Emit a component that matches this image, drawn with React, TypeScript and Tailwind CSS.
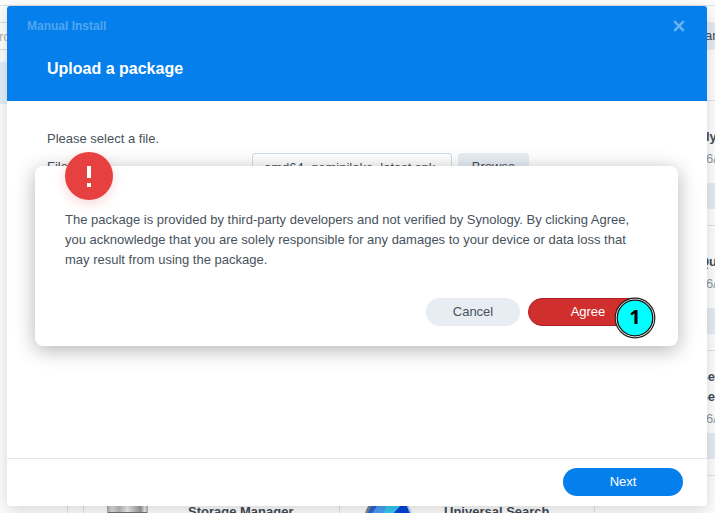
import type { ReactNode } from "react";

function PackageRow({ title, className, button, titleClass }: { title: ReactNode; className: string; button: string; titleClass: string }) {
  return (
    <div className={`flex shrink-0 flex-col border-b border-[#dfe2e6] ${className}`}>
      <div className={`font-bold leading-5 text-[#414b55] ${titleClass}`}>{title}</div>
      <div className="mt-0.5 pl-[6px] text-[13px] leading-5 text-[#8b96a3]">6/</div>
      <div className={`ml-1 bg-[#e5ebf2] ${button}`} />
    </div>
  );
}

function PackageCenter() {
  return (
    <div className="flex h-[513px] w-[715px] overflow-hidden bg-[#fdfdfd]">
      <div className="flex w-[67px] shrink-0 flex-col">
        <div className="h-[6px] border-b border-[#dbdfe3]" />
        <div className="mt-4 flex h-7 items-center border-y border-[#d5dde5] bg-white text-[13px] text-[#b9b1ad]">
          <span className="-ml-px mt-px">rch</span>
        </div>
        <div className="mt-3 h-[42px] bg-[#e3f0fc]" />
      </div>
      <div className="flex w-[633px] shrink-0 flex-col">
        <div className="h-[6px] border-b border-[#dbdfe3]" />
        <div className="mt-[494px] flex h-[13px]">
          <div className="w-[17px] shrink-0 border-x border-[#dfe2e6]" />
          <div className="flex h-10 w-64 shrink-0 border-r border-[#dfe2e6] pl-[23px]">
            <svg width="41" height="20" viewBox="0 0 41 20">
              <defs>
                <linearGradient id="metal">
                  <stop stopColor="#aaa" />
                  <stop offset=".12" stopColor="#ddd" />
                  <stop offset=".3" stopColor="#bbb" />
                  <stop offset=".5" stopColor="#eee" />
                  <stop offset=".82" stopColor="#999" />
                  <stop offset=".92" stopColor="#eee" />
                  <stop offset="1" stopColor="#aaa" />
                </linearGradient>
              </defs>
              <rect width="41" height="20" rx="2" fill="url(#metal)" />
              <path d="M1 12.5h39" stroke="#707474" strokeWidth="1" />
            </svg>
            <span className="ml-10 mt-0.5 text-[13px] font-bold leading-5 text-[#414b55]">Storage Manager</span>
          </div>
          <div className="flex h-10 w-[255px] shrink-0 border-r border-[#dfe2e6] pl-[23px]">
            <svg width="50" height="40" viewBox="0 0 50 40">
              <ellipse cx="26" cy="21" rx="24" ry="26" fill="#b9d6ef" />
              <ellipse cx="24" cy="21" rx="23" ry="26" fill="#718492" />
              <ellipse cx="25" cy="21" rx="21" ry="24" fill="#2b62cf" />
              <path d="M6 18L14 6L31 4L20 20Z" fill="#4c9ef5" />
              <path d="M19 17L24 4H40L27 20Z" fill="#35c9ee" />
              <path d="M28 16L39 4H43L48 16L38 24Z" fill="#0642d9" />
            </svg>
            <span className="ml-[31px] mt-0.5 text-[13px] font-bold leading-5 text-[#414b55]">Universal Search</span>
          </div>
        </div>
      </div>
      <div className="flex w-[15px] shrink-0 flex-col overflow-hidden text-[13px]">
        <div className="h-[6px] shrink-0 border-b border-[#dbdfe3]" />
        <div className="mt-4 flex h-7 shrink-0 items-center bg-[#e5ebf2] text-[#414b55]"><span className="ml-[5px]">an</span></div>
        <div className="h-[51px] shrink-0 border-b border-[#dfe2e6]" />
        <PackageRow title="ly" titleClass="pl-[6px]" className="h-[125px] pt-[26px]" button="mt-[14px] h-[26px]" />
        <PackageRow title="Qu" titleClass="-ml-px" className="h-[125px] pt-[26px]" button="mt-[14px] h-[26px]" />
        <PackageRow title={<>Se<br />Se</>} titleClass="-ml-px" className="h-[125px] pt-[16px]" button="mt-[4px] h-[26px]" />
      </div>
    </div>
  );
}

function InstallWindow() {
  return (
    <section className="absolute left-[7px] top-1.5 flex h-[500px] w-[700px] flex-col overflow-hidden rounded-[3px] bg-white shadow-[0_4px_16px_rgba(0,0,0,0.16)]">
      <header className="h-[95px] bg-[#057feb] px-5 pt-2.5">
        <div className="flex h-5 items-center justify-between text-[#50a5f1]">
          <span className="text-[12px] font-bold">Manual Install</span>
          <svg className="mr-[2px]" width="12" height="12" viewBox="0 0 12 12" fill="none" stroke="#69b2f3" strokeWidth="2.4">
            <path d="M1.2 1.2L10.8 10.8M10.8 1.2L1.2 10.8" />
          </svg>
        </div>
        <h1 className="ml-5 mt-[21px] text-[16px] font-bold leading-6 text-white">Upload a package</h1>
      </header>
      <main className="flex-1 px-10 pt-7 text-[13px] leading-5 text-[#48525c]">
        <p>Please select a file.</p>
        <div className="mt-1 flex h-7 items-center">
          <span className="w-[205px]">File:</span>
          <span className="flex h-7 w-[200px] items-center rounded-[3px] border border-[#d0dce6] px-[11px] pt-0.5">amd64_geminilake_latest.spk</span>
          <span className="ml-1.5 flex h-7 w-[71px] items-center justify-center rounded-[3px] bg-[#e8edf4]">Browse</span>
        </div>
      </main>
      <footer className="flex h-12 shrink-0 items-start justify-end border-t border-[#dfe7ee] pr-6 pt-[9px]">
        <button className="h-7 w-[120px] rounded-full bg-[#057feb] text-[13px] text-white">Next</button>
      </footer>
    </section>
  );
}

function WarningDialog() {
  return (
    <section className="absolute left-[35px] top-[166px] h-[180px] w-[643px] rounded-lg bg-white px-[30px] pt-[44px] text-[13px] text-[#48525c] shadow-[0_4px_20px_rgba(0,0,0,0.3)]">
      <div className="absolute -top-3.5 left-[30px] flex size-12 flex-col items-center rounded-full bg-[#e64040] pt-3.5 shadow-[0_4px_12px_rgba(230,64,64,0.2)]">
        <span className="h-3 w-1 bg-white" />
        <span className="mt-[5px] size-1 bg-white" />
      </div>
      <p className="leading-5">
        The package is provided by third-party developers and not verified by Synology. By clicking Agree,<br />
        you acknowledge that you are solely responsible for any damages to your device or data loss that<br />
        may result from using the package.
      </p>
      <div className="mt-7 flex justify-end gap-2">
        <button className="h-7 w-[94px] rounded-full bg-[#e8edf4]">Cancel</button>
        <button className="h-7 w-[120px] rounded-full border border-[#a91f22] bg-[#d12f2e] text-white">Agree</button>
      </div>
    </section>
  );
}

export default function App() {
  return (
    <div className="relative h-[513px] w-[715px] overflow-hidden font-['Liberation_Sans',sans-serif]">
      <PackageCenter />
      <InstallWindow />
      <WarningDialog />
      <div className="absolute left-[614px] top-[297px] flex size-[42px] items-center justify-center">
        <svg className="absolute inset-0" width="42" height="42" viewBox="0 0 42 42">
          <circle cx="21" cy="21" r="19.8" fill="#fff" stroke="#222" strokeWidth="1.2" />
          <circle cx="21" cy="21" r="17.8" fill="#00ffff" stroke="#111" strokeWidth="1.3" />
        </svg>
        <span className="relative pb-0.5 font-['Noto_Sans',sans-serif] text-[20px] font-bold leading-none text-black">1</span>
      </div>
    </div>
  );
}
